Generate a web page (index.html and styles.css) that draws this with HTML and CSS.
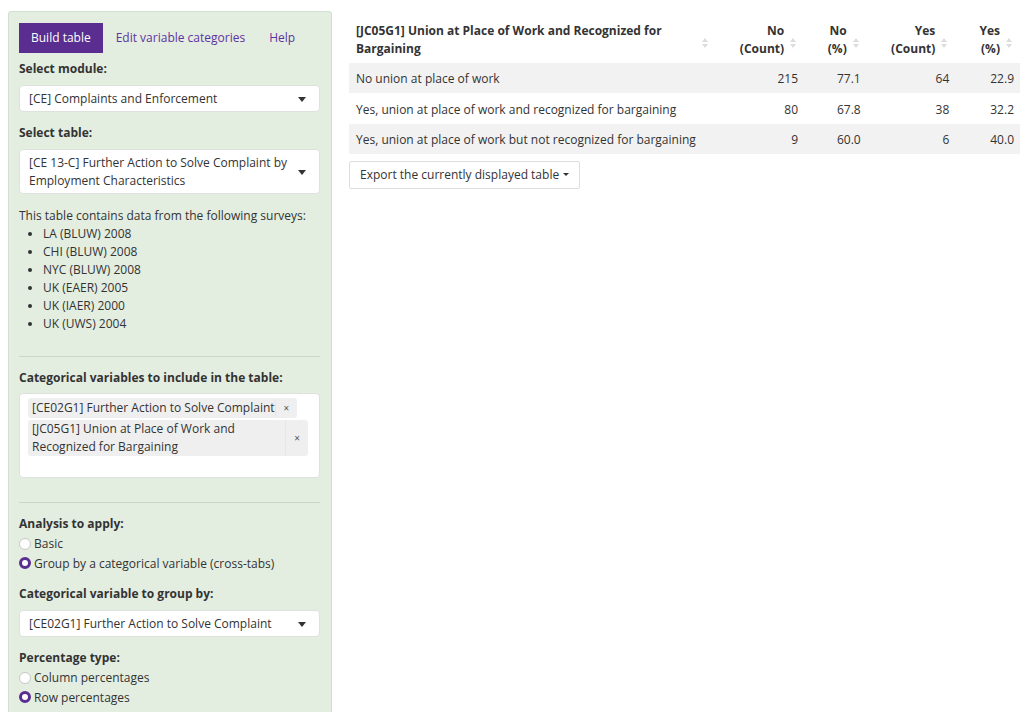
FILE: index.html
```html
<!DOCTYPE html>
<html lang="en">
<head>
    <meta charset="UTF-8">
    <title>Build table</title>
    <link rel="stylesheet" href="styles.css">
</head>
<body>
<div class="page">
    <div class="sidebar">
        <div class="tabs">
            <div class="tab active">Build table</div>
            <div class="tab">Edit variable categories</div>
            <div class="tab">Help</div>
        </div>

        <div class="field">
            <label class="label">Select module:</label>
            <div class="select">
                <span>[CE] Complaints and Enforcement</span>
                <span class="caret"></span>
            </div>
        </div>

        <div class="field">
            <label class="label">Select table:</label>
            <div class="select">
                <span>[CE 13-C] Further Action to Solve Complaint by Employment Characteristics</span>
                <span class="caret"></span>
            </div>
        </div>

        <div class="surveys">
            This table contains data from the following surveys:
            <ul>
                <li>LA (BLUW) 2008</li>
                <li>CHI (BLUW) 2008</li>
                <li>NYC (BLUW) 2008</li>
                <li>UK (EAER) 2005</li>
                <li>UK (IAER) 2000</li>
                <li>UK (UWS) 2004</li>
            </ul>
        </div>

        <hr>

        <div class="field">
            <label class="label tight">Categorical variables to include in the table:</label>
            <div class="multi">
                <div class="chip"><span>[CE02G1] Further Action to Solve Complaint</span><span class="remove">×</span></div>
                <div class="chip wide"><span>[JC05G1] Union at Place of Work and Recognized for Bargaining</span><span class="remove">×</span></div>
            </div>
        </div>

        <hr class="second">

        <div class="field">
            <label class="label radios">Analysis to apply:</label>
            <div class="radio"><span class="dot"></span>Basic</div>
            <div class="radio"><span class="dot on"></span>Group by a categorical variable (cross-tabs)</div>
        </div>

        <div class="field">
            <label class="label">Categorical variable to group by:</label>
            <div class="select">
                <span>[CE02G1] Further Action to Solve Complaint</span>
                <span class="caret"></span>
            </div>
        </div>

        <div class="field">
            <label class="label radios">Percentage type:</label>
            <div class="radio"><span class="dot"></span>Column percentages</div>
            <div class="radio"><span class="dot on"></span>Row percentages</div>
        </div>
    </div>

    <div class="main">
        <table class="results">
            <thead>
                <tr>
                    <th class="first">[JC05G1] Union at Place of Work and Recognized for Bargaining<span class="sort"></span></th>
                    <th class="num c2">No<br>(Count)<span class="sort"></span></th>
                    <th class="num c3">No<br>(%)<span class="sort"></span></th>
                    <th class="num c4">Yes<br>(Count)<span class="sort"></span></th>
                    <th class="num c5">Yes<br>(%)<span class="sort"></span></th>
                </tr>
            </thead>
            <tbody>
                <tr class="odd">
                    <td>No union at place of work</td>
                    <td class="num">215</td>
                    <td class="num">77.1</td>
                    <td class="num">64</td>
                    <td class="num">22.9</td>
                </tr>
                <tr>
                    <td>Yes, union at place of work and recognized for bargaining</td>
                    <td class="num">80</td>
                    <td class="num">67.8</td>
                    <td class="num">38</td>
                    <td class="num">32.2</td>
                </tr>
                <tr class="odd">
                    <td>Yes, union at place of work but not recognized for bargaining</td>
                    <td class="num">9</td>
                    <td class="num">60.0</td>
                    <td class="num">6</td>
                    <td class="num">40.0</td>
                </tr>
            </tbody>
        </table>
        <button class="export">Export the currently displayed table <span class="small-caret"></span></button>
    </div>
</div>
</body>
</html>
```

FILE: styles.css
```css
body {
    margin: 0;
    padding: 0;
    font-family: "Open Sans", "Noto Sans", sans-serif;
    font-size: 12px;
    line-height: 1.5;
    color: #333333;
    background: #ffffff;
    overflow: hidden;
}

.page {
    display: flex;
    align-items: flex-start;
    padding: 11px 5px 0 8px;
    gap: 17px;
}

.sidebar {
    width: 301px;
    flex: none;
    background-color: #e3eee1;
    border: 1px solid #d3dfd0;
    border-radius: 3px;
    padding: 11px 11px 40px 10px;
    min-height: 700px;
}

.tabs {
    display: flex;
    margin-bottom: 7px;
}

.tab {
    padding: 5px 12px;
    line-height: 20px;
    color: #5e32a0;
}

.tab.active {
    background-color: #5a2d91;
    color: #ffffff;
    margin-right: 1px;
}

.field {
    margin-bottom: 12px;
}

.label {
    display: block;
    font-weight: bold;
    line-height: 18px;
    margin-bottom: 7px;
}

.label.tight {
    margin-bottom: 6px;
}

.label.radios {
    margin-bottom: 1px;
}

.select {
    display: flex;
    align-items: center;
    background: #ffffff;
    border: 1px solid #dde3dc;
    border-radius: 4px;
    padding: 4px 28px 3px 9px;
    position: relative;
    line-height: 18px;
}

.caret {
    position: absolute;
    right: 13px;
    top: 50%;
    margin-top: -2px;
    border-left: 4.5px solid transparent;
    border-right: 4.5px solid transparent;
    border-top: 5px solid #333333;
}

.surveys {
    margin-top: 13px;
    line-height: 18px;
}

.surveys ul {
    margin: 0;
    padding-left: 24px;
}

hr {
    border: none;
    border-top: 1px solid #cbd6c8;
    margin: 23px 0 12px;
}

hr.second {
    margin-top: 24px;
}

.multi {
    background: #ffffff;
    border: 1px solid #dde3dc;
    border-radius: 4px;
    padding: 4px 11px 21px 8px;
}

.chip {
    display: inline-flex;
    align-items: center;
    background: #efefef;
    border-radius: 3px;
    padding: 1px 0 1px 4px;
    margin-bottom: 2px;
    line-height: 18px;
}

.chip.wide {
    display: flex;
    padding: 0 0 0 4px;
    margin-bottom: 0;
}

.chip .remove {
    font-size: 10px;
    padding: 0 8px;
    color: #555555;
    border-left: 1px solid #e6e6e6;
    align-self: stretch;
    display: flex;
    align-items: center;
}

.chip.wide span:first-child {
    flex: 1;
}

.radio {
    display: flex;
    align-items: center;
    line-height: 19.5px;
}

.dot {
    width: 10px;
    height: 10px;
    border: 1px solid #c8c8c8;
    border-radius: 50%;
    background: #ffffff;
    margin-right: 3px;
}

.dot.on {
    width: 6px;
    height: 6px;
    border: 3px solid #5a2d91;
}

.main {
    flex: 1;
    padding-top: 11px;
}

.results {
    border-collapse: collapse;
    width: 671px;
}

.results th {
    font-weight: bold;
    text-align: left;
    vertical-align: bottom;
    padding: 0 20px 4px 7px;
    position: relative;
    line-height: 18px;
}

.results th.first {
    width: 344px;
    padding-right: 50px;
}

.results th.num {
    text-align: right;
}

.c2 { width: 63px; }
.c3 { width: 38px; }
.c4 { width: 64px; }
.c5 { width: 40px; }

.sort {
    position: absolute;
    right: 8px;
    top: 50%;
    width: 6px;
    height: 10px;
    margin-top: -4px;
}

.sort::before, .sort::after {
    content: "";
    position: absolute;
    left: 0;
    border-left: 3px solid transparent;
    border-right: 3px solid transparent;
}

.sort::before {
    top: 0;
    border-bottom: 4px solid #dddddd;
}

.sort::after {
    bottom: 0;
    border-top: 4px solid #dddddd;
}

.results td {
    padding: 6px 6px 4.5px 7px;
    line-height: 19px;
    border-top: 1px solid #ffffff;
}

.results td.num {
    text-align: right;
}

.results tr.odd td {
    background-color: #f2f2f2;
}

.export {
    margin-top: 7px;
    font-family: inherit;
    font-size: 12px;
    color: #333333;
    background: #ffffff;
    border: 1px solid #dddddd;
    border-radius: 2px;
    padding: 4px 10px;
    line-height: 18px;
}

.small-caret {
    display: inline-block;
    vertical-align: middle;
    margin-left: 1px;
    margin-top: -2px;
    border-left: 3px solid transparent;
    border-right: 3px solid transparent;
    border-top: 3px solid #333333;
}
```
